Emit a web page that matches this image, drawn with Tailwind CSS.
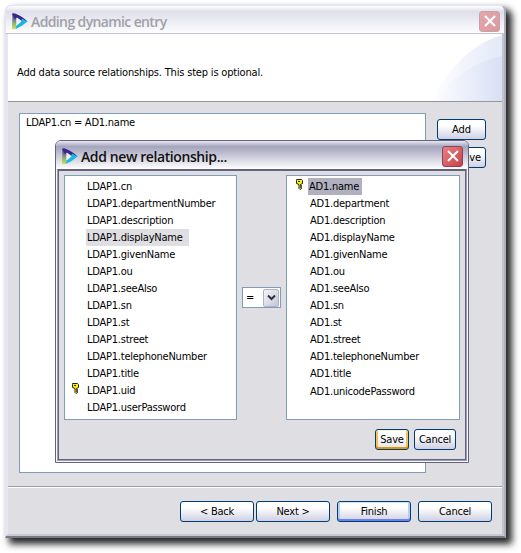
<!DOCTYPE html>
<html lang="en"><head><meta charset="utf-8"><title>Adding dynamic entry</title>
<script src="https://cdn.jsdelivr.net/npm/@tailwindcss/browser@4"></script></head>
<body class="w-[521px] h-[553px] overflow-hidden bg-white relative text-black text-[11px] leading-[17px] whitespace-nowrap font-['DejaVu_Sans_Condensed','DejaVu_Sans',sans-serif] [font-stretch:condensed] tracking-[-0.23px]">
<svg class="absolute w-0 h-0"><defs>
<linearGradient id="lg" x1="0" y1="0" x2="0" y2="1"><stop offset="0" stop-color="#3a2590"/><stop offset=".5" stop-color="#7f9c80"/><stop offset="1" stop-color="#d8ea50"/></linearGradient>
<symbol id="logo" viewBox="0 0 16 17"><path d="M.5 1 4.500 5 4.500 12 5 15 2 16.500Q0 16.500 0 15Z" fill="url(#lg)"/><path d="M0 1Q.5 0 3 .5 10 3 15.500 8.500L10.500 8.500 5 4.500 3 6Z" fill="#38268a"/><path d="M15.500 8.500Q10 13.500 3.500 16L4.500 12.500 9 8.500 10 5.500Z" fill="#18b7e8"/><path d="M4.500 5 9.500 8.500 4.500 12.500Z" fill="#f0f2fa"/></symbol>
<symbol id="key" viewBox="0 0 8 11"><path d="M1.500.5h5l1 1v3l-2 1v1h1v1h-1v1h1v1l-1.500 1-1-1v-4l-2.500-1v-3z" fill="#fff200" stroke="#222" stroke-width="1"/><path d="M3 2h2v1H3z" fill="#222"/></symbol>
<symbol id="x" viewBox="0 0 12 12"><path d="M1 1 11 11M11 1 1 11" stroke="#fff" stroke-width="2.1"/></symbol>
</defs></svg>
<main class="absolute left-[5px] top-[5px] w-[501px] h-[533px] rounded-t-[6px] bg-[#dedee3] border border-[#e3e3f2] border-r-2 border-r-[#aeb0b9] border-b-2 border-b-[#777a80] shadow-[5px_5px_7px_1px_rgba(0,0,0,.85)] flex flex-col [clip-path:inset(-5px_-15px_-15px_-5px)]">
 <header class="h-[28px] shrink-0 rounded-t-[5px] bg-linear-to-b from-white via-[#dfdfec] via-20% to-[#fdfdff] border-b border-[#c3c3d4] flex items-center pl-[6px] pr-[4px]">
  <svg class="w-[16px] h-[17px] mt-[3px]"><use href="#logo"/></svg>
  <h1 class="ml-[3px] mt-[5px] flex-1 text-[14px] leading-[20px] font-semibold text-[#a1a1a5] font-['Open_Sans',sans-serif] [font-stretch:normal] tracking-[-0.62px]">Adding dynamic entry</h1>
  <span class="w-[21px] h-[21px] mt-[3px] rounded-[3px] border border-[#c7a0ae] bg-linear-to-br from-[#e2a7ac] to-[#dd999d] flex items-center justify-center"><svg class="w-[12px] h-[12px]"><use href="#x"/></svg></span>
 </header>
 <div class="flex-1 flex flex-col border-l-2 border-l-[#e5e5f5] border-r-2 border-r-[#c3c3d2] border-b-2 border-b-[#c9c9d5]">
  <section class="relative h-[68px] bg-white border-b border-[#94949a] shrink-0">
   <svg class="absolute right-0 top-0 w-[76px] h-[67px]" viewBox="0 0 76 67"><defs><linearGradient id="a"><stop stop-color="#fff"/><stop offset="1" stop-color="#e4e9f8"/></linearGradient><linearGradient id="b"><stop stop-color="#fcfdff"/><stop offset="1" stop-color="#d9e0f5"/></linearGradient></defs><path d="M5 67Q35 12 76 1V67Z" fill="url(#a)"/><path d="M9 67Q36 30 76 22V67Z" fill="url(#b)"/></svg>
   <p class="relative pt-[30px] pl-[9px] tracking-[-0.18px]">Add data source relationships. This step is optional.</p>
  </section>
  <section class="flex h-[385px] shrink-0 pt-[11px] pl-[11px] gap-[11px] border-b border-[#9c9ca1]">
   <div class="w-[407px] h-[360px] bg-white border border-[#7f9db9] pl-[6px]">LDAP1.cn = AD1.name</div>
   <div class="flex flex-col gap-[7px] pt-[6px]">
    <button class="w-[49px] h-[21px] rounded-[3px] border border-[#003c74] bg-linear-to-b from-white from-30% to-[#d0d0e3] tracking-[-0.1px]">Add</button>
    <button class="w-[49px] h-[21px] rounded-[3px] border border-[#003c74] bg-linear-to-b from-white from-30% to-[#d0d0e3]">Remove</button>
   </div>
  </section>
  <footer class="flex-1 border-t border-white flex pt-[13px] pl-[172px]">
   <button class="w-[74px] h-[21px] mr-[2px] rounded-[3px] border border-[#003c74] bg-linear-to-b from-white from-30% to-[#d0d0e3]">&lt; Back</button>
   <button class="w-[74px] h-[21px] mr-[7px] rounded-[3px] border border-[#003c74] bg-linear-to-b from-white from-30% to-[#d0d0e3]">Next &gt;</button>
   <button class="w-[74px] h-[21px] mr-[7px] rounded-[3px] border border-[#003c74] bg-linear-to-b from-white from-30% to-[#d0d0e3] shadow-[inset_0_-2px_0_#6982ee,inset_0_1px_0_#cee7ff,inset_2px_0_0_#b5cdf5,inset_-2px_0_0_#b5cdf5]">Finish</button>
   <button class="w-[74px] h-[21px] rounded-[3px] border border-[#003c74] bg-linear-to-b from-white from-30% to-[#d0d0e3]">Cancel</button>
  </footer>
 </div>
</main>
<aside class="absolute left-[55px] top-[140px] w-[414px] h-[323px] rounded-t-[6px] border border-[#63637f] bg-[#f5f5fa] flex flex-col px-px pb-px">
 <header class="h-[28px] shrink-0 -mx-px rounded-t-[5px] bg-linear-to-b from-[#e8e8f0] via-[#a4a4bd] via-20% to-white flex items-center pl-[6px] pr-[5px]">
  <svg class="w-[16px] h-[17px] mt-[2px]"><use href="#logo"/></svg>
  <h2 class="ml-[3px] mt-[3px] flex-1 text-[14px] leading-[20px] font-semibold text-[#111] font-['Open_Sans',sans-serif] [font-stretch:normal] tracking-[-0.4px]">Add new relationship...</h2>
  <span class="w-[21px] h-[21px] mt-[2px] rounded-[3px] border border-[#8b405c] bg-linear-to-br from-[#e58082] to-[#c93f46] flex items-center justify-center"><svg class="w-[12px] h-[12px]"><use href="#x"/></svg></span>
 </header>
 <div class="flex-1 border border-[#9c9cb0] border-t-[#63637f] bg-[#63637f] p-px flex"><div class="flex-1 bg-[#dedee3] pt-[4px] pl-[5px]">
  <div class="flex items-start">
   <ul class="w-[173px] h-[245px] bg-white border border-[#7f9db9] pt-[2px] pl-[22px]">
    <li>LDAP1.cn</li><li>LDAP1.departmentNumber</li><li>LDAP1.description</li><li class="w-[103px] h-[17px] bg-[#dedee3] -ml-px pl-px">LDAP1.displayName</li><li>LDAP1.givenName</li><li>LDAP1.ou</li><li>LDAP1.seeAlso</li><li>LDAP1.sn</li><li>LDAP1.st</li><li>LDAP1.street</li><li>LDAP1.telephoneNumber</li><li>LDAP1.title</li><li class="flex"><svg class="w-[8px] h-[11px] -ml-[16px] mr-[8px] mt-[1px]"><use href="#key"/></svg>LDAP1.uid</li><li>LDAP1.userPassword</li>
   </ul>
   <div class="w-[39px] h-[21px] mt-[112px] ml-[5px] mr-[5px] border border-[#7f9db9] bg-white flex items-center p-px"><span class="flex-1 pl-[2px]">=</span><span class="w-[16px] h-[18px] rounded-[2px] border border-[#b1b1c5] bg-linear-to-br from-[#f5f5fb] to-[#c5c5dc] flex items-center justify-center"><svg class="w-[9px] h-[7px]" viewBox="0 0 9 7"><path d="M1 1.500 4.500 5 8 1.500" stroke="#333" stroke-width="2" fill="none"/></svg></span></div>
   <ul class="w-[174px] h-[245px] bg-white border border-[#7f9db9] pt-[2px] pl-[23px]">
    <li class="flex w-[68px]"><svg class="w-[8px] h-[11px] -ml-[15px] mr-[5px] mt-[1px] shrink-0"><use href="#key"/></svg><span class="w-[54px] shrink-0 bg-[#b0b0bf] pl-px">AD1.name</span></li><li>AD1.department</li><li>AD1.description</li><li>AD1.displayName</li><li>AD1.givenName</li><li>AD1.ou</li><li>AD1.seeAlso</li><li>AD1.sn</li><li>AD1.st</li><li>AD1.street</li><li>AD1.telephoneNumber</li><li>AD1.title</li><li class="pt-px">AD1.unicodePassword</li>
   </ul>
  </div>
  <div class="flex pt-[9px] pl-[311px] gap-[5px]">
   <button class="w-[34px] h-[21px] rounded-[3px] border border-[#003c74] bg-linear-to-b from-white from-30% to-[#e3e3ee] shadow-[inset_0_-2px_0_#e59700,inset_0_1px_0_#fff0cf,inset_2px_0_0_#fac14f,inset_-2px_0_0_#fac14f]">Save</button>
   <button class="w-[42px] h-[21px] rounded-[3px] border border-[#003c74] bg-linear-to-b from-white from-30% to-[#d0d0e3]">Cancel</button>
  </div>
 </div></div>
</aside>
</body></html>
